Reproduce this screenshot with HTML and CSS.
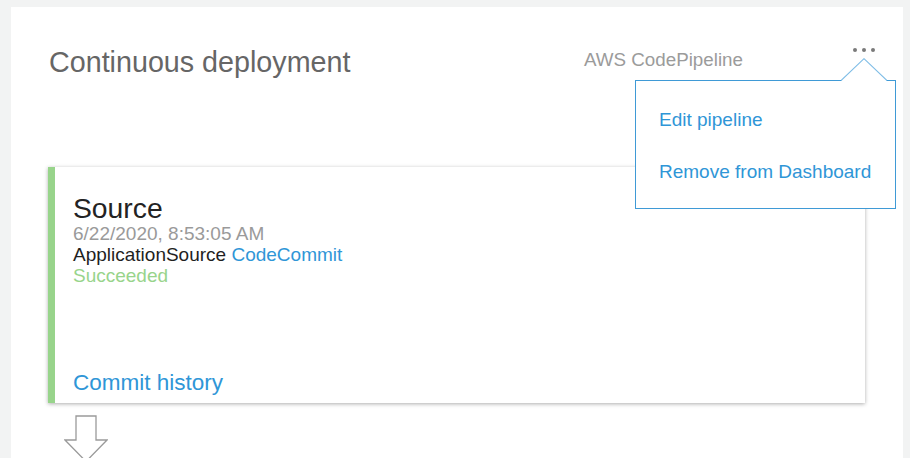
FILE: index.html
```html
<!DOCTYPE html>
<html lang="en">
<head>
<meta charset="utf-8">
<title>Continuous deployment</title>
<link rel="stylesheet" href="styles.css">
</head>
<body>
<section class="panel">
  <header class="panel-header">
    <h1 class="panel-title">Continuous deployment</h1>
    <div class="panel-tools">
      <span class="panel-service">AWS CodePipeline</span>
      <div class="actions">
        <span class="dot"></span><span class="dot"></span><span class="dot"></span>
        <div class="menu">
          <svg class="menu-caret" width="46" height="23" viewBox="0 0 46 23">
            <polygon points="0,23 23,0.7 46,23" fill="#ffffff"/>
            <polyline points="0,22.5 23,0.7 46,22.5" fill="none" stroke="#7fbde6" stroke-width="1.1"/>
          </svg>
          <a class="menu-item" href="#">Edit pipeline</a>
          <a class="menu-item" href="#">Remove from Dashboard</a>
        </div>
      </div>
    </div>
  </header>

  <article class="stage">
    <h2 class="stage-name">Source</h2>
    <div class="stage-date">6/22/2020, 8:53:05 AM</div>
    <div class="stage-action">ApplicationSource <a href="#" class="link">CodeCommit</a></div>
    <div class="stage-status">Succeeded</div>
    <a href="#" class="stage-footer-link">Commit history</a>
  </article>

  <svg class="flow-arrow" width="44" height="48" viewBox="0 0 44 48">
    <polygon points="12,1 32,1 32,25 43,25 22,46.5 1,25 12,25" fill="#ffffff" stroke="#9a9a9a" stroke-width="1.3" stroke-linejoin="miter"/>
  </svg>
</section>
</body>
</html>
```

FILE: styles.css
```css
html, body {
  margin: 0;
  padding: 0;
  height: 100%;
}

body {
  background: #f2f3f3;
  font-family: "Liberation Sans", Arial, Helvetica, sans-serif;
  overflow: hidden;
}

.panel {
  margin: 7px 7px 0 11px;
  height: calc(100vh - 7px);
  box-sizing: border-box;
  background: #ffffff;
  padding: 40px 28px 0 37px;
  display: flex;
  flex-direction: column;
  align-items: stretch;
  overflow: hidden;
}

.panel-header {
  display: flex;
  justify-content: space-between;
  align-items: flex-start;
  flex: none;
}

.panel-title {
  margin: 0 0 0 1px;
  font-size: 28.7px;
  line-height: 30px;
  font-weight: normal;
  color: #666666;
}

.panel-tools {
  display: flex;
  align-items: flex-start;
  gap: 110px;
}

.panel-service {
  margin-top: 3px;
  font-size: 18.8px;
  line-height: 20px;
  color: #9b9b9b;
}

.actions {
  position: relative;
  display: flex;
  gap: 5px;
  margin-top: 1px;
}

.dot {
  width: 4px;
  height: 4px;
  border-radius: 50%;
  background: #7a7a7a;
}

.menu {
  position: absolute;
  left: -218px;
  top: 32px;
  width: 261px;
  height: 129px;
  box-sizing: border-box;
  border: 1px solid #3f9ad6;
  background: #ffffff;
  padding: 28px 0 0 23px;
  display: flex;
  flex-direction: column;
  gap: 30px;
  z-index: 2;
}

.menu-caret {
  position: absolute;
  left: 205px;
  top: -23px;
  display: block;
}

.menu-item {
  font-size: 19px;
  line-height: 22px;
  color: #2f96d7;
  text-decoration: none;
  white-space: nowrap;
}

.stage {
  flex: none;
  margin: 90px 10px 0 0;
  height: 236px;
  box-sizing: border-box;
  background: #ffffff;
  border-left: 7px solid #98d48b;
  box-shadow: 0 1px 4px rgba(0, 0, 0, 0.32);
  padding: 26px 18px 7px 18px;
  display: flex;
  flex-direction: column;
  align-items: flex-start;
}

.stage-name {
  margin: 0;
  font-size: 28.3px;
  line-height: 30px;
  font-weight: normal;
  color: #232323;
}

.stage-date {
  font-size: 19px;
  line-height: 21px;
  color: #9a9a9a;
}

.stage-action {
  font-size: 19px;
  line-height: 21px;
  color: #1f1f1f;
}

.link {
  color: #2f96d7;
  text-decoration: none;
}

.stage-status {
  font-size: 19px;
  line-height: 21px;
  color: #98d48b;
}

.stage-footer-link {
  margin-top: auto;
  font-size: 22.5px;
  line-height: 26px;
  color: #2f96d7;
  text-decoration: none;
}

.flow-arrow {
  display: block;
  margin: 12px 0 0 16px;
  flex: none;
}
```
